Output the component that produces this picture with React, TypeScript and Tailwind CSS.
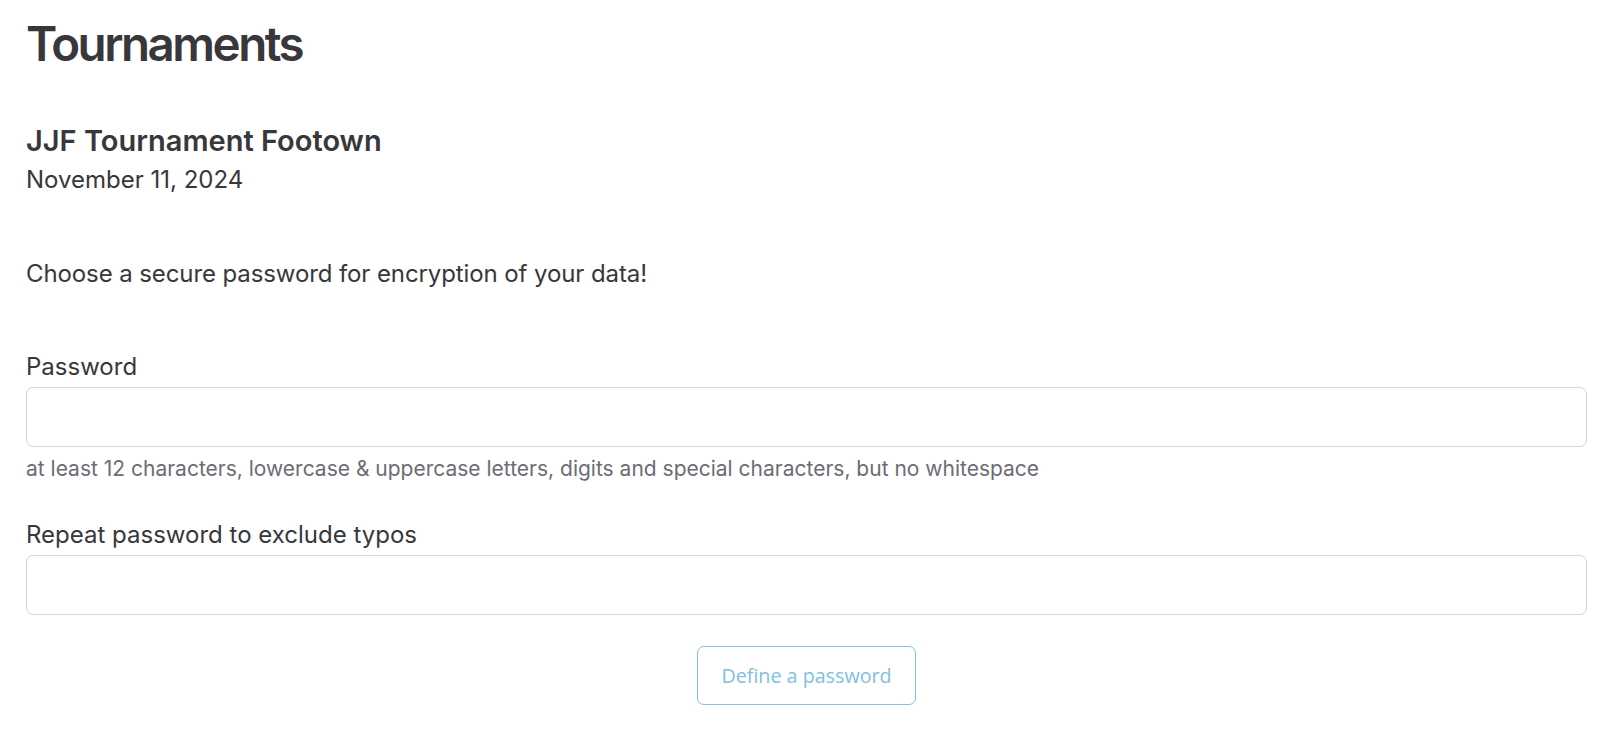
import React from "react";

export default function App() {
  return (
    <div className="min-h-screen bg-white text-[#37373c] font-['Inter',sans-serif] px-[26px] pt-[15px]">
      <h1 className="text-[47.5px] leading-[57.6px] font-semibold tracking-[-2.5px]">Tournaments</h1>
      <h2 className="mt-[51px] text-[29px] leading-[33.6px] font-semibold">JJF Tournament Footown</h2>
      <div className="mt-[5px] text-[24px] leading-[36px]">November 11, 2024</div>
      <p className="mt-[58px] text-[24px] leading-[36px] tracking-[-0.1px]">Choose a secure password for encryption of your data!</p>

      <div className="mt-[57px]">
        <label className="block text-[24px] leading-[36px]">Password</label>
        <input
          type="password"
          className="mt-[2px] block w-full h-[60px] rounded-[7px] border border-[#d4d4d8] bg-white px-4 outline-none"
        />
        <div className="mt-[7px] text-[21px] leading-[30px] text-[#6c6c75]">
          at least 12 characters, lowercase &amp; uppercase letters, digits and special characters, but no whitespace
        </div>
      </div>

      <div className="mt-[33px]">
        <label className="block text-[24px] leading-[36px]">Repeat password to exclude typos</label>
        <input
          type="password"
          className="mt-[2px] block w-full h-[60px] rounded-[7px] border border-[#d4d4d8] bg-white px-4 outline-none"
        />
      </div>

      <div className="mt-[31px] flex justify-center">
        <button
          disabled
          className="w-[219px] h-[59px] rounded-[7px] border border-[#80c2e3] bg-white text-[#7fc0e0] text-[19.7px] font-['Open_Sans',sans-serif]"
        >
          Define a password
        </button>
      </div>
    </div>
  );
}
